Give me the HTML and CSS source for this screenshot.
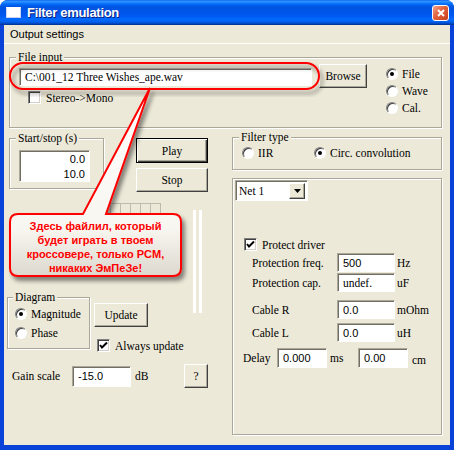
FILE: index.html
```html
<!DOCTYPE html>
<html lang="ru">
<head>
    <meta charset="UTF-8">
    <title>Filter emulation</title>
    <link rel="stylesheet" href="styles.css">
</head>
<body>
    <div class="window">
        <div class="titlebar">
            <span class="app-icon"></span>
            <span class="title">Filter emulation</span>
            <span class="close-btn">
                <svg width="8" height="8" viewBox="0 0 8 8"><path d="M1 1L7 7M7 1L1 7" stroke="#fff" stroke-width="2"/></svg>
            </span>
        </div>
        <div class="client">
            <div class="menubar"><span class="menu-item">Output settings</span></div>
            <div class="dialog">
                <div class="group file-group">
                    <span class="group-title">File input</span>
                    <div class="file-row">
                        <div class="file-col">
                            <div class="edit file-path">C:\001_12 Three Wishes_ape.wav</div>
                            <div class="check-row stereo"><span class="box"></span>Stereo-&gt;Mono</div>
                        </div>
                        <div class="btn browse">Browse</div>
                        <div class="radio-col">
                            <div class="radio-opt"><span class="radio on"></span>File</div>
                            <div class="radio-opt"><span class="radio"></span>Wave</div>
                            <div class="radio-opt"><span class="radio"></span>Cal.</div>
                        </div>
                    </div>
                </div>

                <div class="lower">
                    <div class="left-col">
                        <div class="play-row">
                            <div class="group startstop-group">
                                <span class="group-title">Start/stop (s)</span>
                                <div class="edit multi">
                                    <div>0.0</div>
                                    <div>10.0</div>
                                </div>
                            </div>
                            <div class="play-btns">
                                <div class="btn default play">Play</div>
                                <div class="btn stop">Stop</div>
                            </div>
                        </div>

                        <div class="mid-row">
                            <div class="mid-main">
                                <div class="meter"><span></span><span></span><span></span><span></span><span></span></div>
                                <div class="diagram-row">
                                    <div class="group diagram-group">
                                        <span class="group-title">Diagram</span>
                                        <div class="radio-opt"><span class="radio on"></span>Magnitude</div>
                                        <div class="radio-opt"><span class="radio"></span>Phase</div>
                                    </div>
                                    <div class="update-col">
                                        <div class="btn update">Update</div>
                                        <div class="check-row always">
                                            <span class="box"><svg width="9" height="9" viewBox="0 0 9 9"><path d="M1 4L3 6.5L8 1.5" stroke="#000" stroke-width="2" fill="none"/></svg></span>Always update
                                        </div>
                                    </div>
                                </div>
                            </div>
                            <div class="slider"></div>
                        </div>

                        <div class="gain-row">
                            <span class="gain-label">Gain scale</span>
                            <div class="edit num gain-input">-15.0</div>
                            <span class="unit db">dB</span>
                            <div class="btn help">?</div>
                        </div>
                    </div>

                    <div class="right-col">
                        <div class="group filter-group">
                            <span class="group-title">Filter type</span>
                            <div class="filter-opts">
                                <div class="radio-opt iir"><span class="radio"></span>IIR</div>
                                <div class="radio-opt"><span class="radio on"></span>Circ. convolution</div>
                            </div>
                        </div>

                        <div class="group net-panel">
                            <div class="combo">
                                <span class="combo-text">Net 1</span>
                                <span class="combo-btn"><svg width="7" height="4" viewBox="0 0 7 4"><path d="M0 0H7L3.5 4Z" fill="#000"/></svg></span>
                            </div>
                            <div class="check-row protect">
                                <span class="box"><svg width="9" height="9" viewBox="0 0 9 9"><path d="M1 4L3 6.5L8 1.5" stroke="#000" stroke-width="2" fill="none"/></svg></span>Protect driver
                            </div>
                            <div class="param-row freq">
                                <span class="param-label">Protection freq.</span>
                                <div class="edit num">500</div>
                                <span class="unit">Hz</span>
                            </div>
                            <div class="param-row cap">
                                <span class="param-label">Protection cap.</span>
                                <div class="edit serif">undef.</div>
                                <span class="unit">uF</span>
                            </div>
                            <div class="param-row cable-r">
                                <span class="param-label">Cable R</span>
                                <div class="edit num">0.0</div>
                                <span class="unit">mOhm</span>
                            </div>
                            <div class="param-row cable-l">
                                <span class="param-label">Cable L</span>
                                <div class="edit num">0.0</div>
                                <span class="unit">uH</span>
                            </div>
                            <div class="delay-row">
                                <span class="delay-label">Delay</span>
                                <div class="edit num">0.000</div>
                                <span class="unit ms">ms</span>
                                <div class="edit num">0.00</div>
                                <span class="unit cm">cm</span>
                            </div>
                        </div>
                    </div>
                </div>
            </div>
        </div>

        <!-- пометка поверх окна -->
        <svg class="annotation" width="454" height="450" viewBox="0 0 454 450">
            <defs>
                <filter id="shadow" x="-10%" y="-10%" width="130%" height="140%">
                    <feDropShadow dx="3" dy="4" stdDeviation="2" flood-color="#000" flood-opacity="0.45"/>
                </filter>
                <linearGradient id="calloutFill" x1="0" y1="0" x2="0" y2="1">
                    <stop offset="0" stop-color="#ffffff"/>
                    <stop offset="0.75" stop-color="#f8f6f0"/>
                    <stop offset="1" stop-color="#dcd8ce"/>
                </linearGradient>
            </defs>
            <rect x="10" y="63" width="309" height="26" rx="13" fill="none" stroke="#ff0000" stroke-width="2" filter="url(#shadow)"/>
            <path d="M18 214L83 214L150 88L106 214L173 214Q181 214 181 222L181 268Q181 276 173 276L18 276Q10 276 10 268L10 222Q10 214 18 214Z"
                  fill="url(#calloutFill)" stroke="#ff0000" stroke-width="2" filter="url(#shadow)"/>
        </svg>
        <div class="callout-text">Здесь файлил, который<br>будет играть в твоем<br>кроссовере, только PCM,<br>никаких ЭмПеЗе!</div>
    </div>
</body>
</html>
```

FILE: styles.css
```css
* {
    box-sizing: border-box;
}
body {
    margin: 0;
    background-color: #fff;
}
.window {
    position: relative;
    width: 454px;
    height: 450px;
    background-color: #0842d8;
    border-radius: 8px 8px 0 0;
    display: flex;
    flex-direction: column;
    overflow: hidden;
}
.titlebar {
    height: 25px;
    flex: none;
    display: flex;
    align-items: center;
    padding: 0 6px;
    background: linear-gradient(#0058ee 0%, #3593ff 4%, #288eff 8%, #127dff 12%, #036ffc 16%, #0262ee 20%, #0057e5 26%, #0054e3 30%, #0055eb 56%, #005bf5 66%, #026afe 76%, #0062ef 86%, #0052d6 92%, #0040ab 96%, #003092 100%);
}
.app-icon {
    width: 15px;
    height: 11px;
    background-color: #fff;
    border: 1px solid #c8d4f0;
    border-top: 2px solid #fff;
}
.title {
    margin-left: 6px;
    font-family: 'Liberation Sans', sans-serif;
    font-weight: bold;
    font-size: 13px;
    letter-spacing: -0.3px;
    color: #fff;
    text-shadow: 1px 1px 0 #0a1e80;
    flex: 1;
}
.close-btn {
    width: 17px;
    height: 16px;
    margin-right: -1px;
    border: 1px solid #fff;
    border-radius: 3px;
    background: linear-gradient(135deg, #f2a48c 0%, #e2613c 45%, #c6401c 100%);
    display: flex;
    align-items: center;
    justify-content: center;
}
.client {
    flex: 1;
    margin: 0 4px 5px 4px;
    background-color: #ece9d8;
    font-family: 'Liberation Serif', serif;
    font-size: 11.5px;
    color: #000;
}
.menubar {
    height: 19px;
    border-bottom: 1px solid #fff;
    line-height: 18px;
    padding-left: 6px;
    font-family: 'Liberation Sans', sans-serif;
    font-size: 11px;
}

/* рамки групп */
.group {
    border: 1px solid #aca899;
    box-shadow: 1px 1px 0 #fff, inset 1px 1px 0 #fff;
}
.group-title {
    display: table;
    margin: -8px 0 0 -3px;
    padding: 0 2px;
    line-height: 14px;
    background-color: #ece9d8;
}

/* контролы */
.btn {
    display: flex;
    align-items: center;
    justify-content: center;
    background-color: #ece9d8;
    border: 1px solid;
    border-color: #fff #404040 #404040 #fff;
    box-shadow: inset -1px -1px 0 #aca899;
}
.btn.default {
    border: 1px solid #000;
    box-shadow: inset 1px 1px 0 #fff, inset -1px -1px 0 #404040, inset -2px -2px 0 #aca899;
}
.edit {
    background-color: #fff;
    border: 1px solid;
    border-color: #aca899 #fff #fff #aca899;
    box-shadow: inset 1px 1px 0 #716f64;
    padding-left: 5px;
    display: flex;
    align-items: center;
    white-space: nowrap;
}
.edit.num {
    font-family: 'Liberation Sans', sans-serif;
    font-size: 11px;
}
.radio-opt {
    display: flex;
    align-items: center;
    white-space: nowrap;
}
.radio {
    position: relative;
    flex: none;
    width: 12px;
    height: 12px;
    margin-right: 4px;
    border-radius: 50%;
    background-color: #fff;
    border: 1px solid;
    border-color: #808080 #fff #fff #808080;
    box-shadow: inset 1px 1px 0 #404040;
}
.radio.on::after {
    content: '';
    position: absolute;
    left: 3px;
    top: 3px;
    width: 4px;
    height: 4px;
    border-radius: 50%;
    background-color: #000;
}
.check-row {
    display: flex;
    align-items: center;
    height: 13px;
    white-space: nowrap;
}
.box {
    flex: none;
    width: 13px;
    height: 13px;
    margin-right: 5px;
    background-color: #fff;
    border: 1px solid;
    border-color: #808080 #fff #fff #808080;
    box-shadow: inset 1px 1px 0 #404040, inset -1px -1px 0 #d4d0c8;
    display: flex;
    align-items: center;
    justify-content: center;
}
.unit {
    margin-left: 2px;
}

/* File input */
.file-group {
    margin: 13px 0 0 5px;
    width: 433px;
    height: 71px;
    padding-left: 9px;
}
.file-row {
    display: flex;
    align-items: flex-start;
}
.file-col {
    margin-top: 4px;
}
.file-path {
    width: 293px;
    height: 18px;
}
.stereo {
    margin: 5px 0 0 9px;
}
.browse {
    margin-left: 7px;
    width: 48px;
    height: 24px;
}
.radio-col {
    margin: 1px 0 0 19px;
}
.radio-col .radio-opt {
    height: 17px;
}

/* нижняя часть */
.lower {
    display: flex;
}
.left-col {
    width: 228px;
}
.play-row {
    display: flex;
    align-items: flex-start;
}
.startstop-group {
    margin: 10px 0 0 5px;
    width: 95px;
    height: 51px;
    padding-left: 9px;
}
.multi {
    margin-top: 5px;
    width: 71px;
    height: 32px;
    flex-direction: column;
    align-items: flex-end;
    padding: 1px 4px 0 0;
    font-family: 'Liberation Sans', sans-serif;
    font-size: 11px;
    line-height: 15px;
}
.play-btns {
    margin: 10px 0 0 32px;
}
.play {
    width: 72px;
    height: 25px;
}
.stop {
    width: 72px;
    height: 24px;
    margin-top: 5px;
}
.mid-row {
    display: flex;
    align-items: flex-start;
}
.mid-main {
    width: 189px;
}
.meter {
    display: flex;
    margin: 11px 0 0 106px;
}
.meter span {
    width: 11px;
    height: 11px;
    border: 1px solid #bdbab0;
    margin-right: -1px;
}
.diagram-row {
    display: flex;
    align-items: flex-start;
    margin-top: 83px;
}
.diagram-group {
    margin-left: 3px;
    width: 83px;
    height: 52px;
    padding-left: 7px;
}
.diagram-group .group-title {
    margin-left: -2px;
}
.diagram-group .radio-opt {
    height: 19px;
}
.update-col {
    margin: 6px 0 0 4px;
}
.update {
    width: 54px;
    height: 24px;
}
.always {
    margin: 12px 0 0 3px;
}
.slider {
    margin-top: 18px;
    width: 9px;
    height: 103px;
    border-left: 3px solid #fff;
    border-right: 3px solid #fff;
}
.gain-row {
    display: flex;
    align-items: center;
    height: 24px;
    margin-top: 12px;
}
.gain-label {
    margin-left: 8px;
    width: 60px;
}
.gain-input {
    width: 59px;
    height: 21px;
}
.db {
    margin-left: 4px;
    width: 49px;
}
.help {
    width: 24px;
    height: 24px;
}

/* правая колонка */
.right-col {
    width: 210px;
}
.filter-group {
    margin-top: 9px;
    height: 33px;
    padding-left: 9px;
}
.filter-opts {
    display: flex;
    margin-top: 3px;
}
.iir {
    width: 72px;
}
.net-panel {
    margin-top: 8px;
    height: 257px;
    padding: 1px 0 0 2px;
}
.combo {
    width: 73px;
    height: 21px;
    display: flex;
    align-items: center;
    background-color: #fff;
    border: 1px solid;
    border-color: #aca899 #fff #fff #aca899;
    box-shadow: inset 1px 1px 0 #716f64;
    padding: 2px 2px 2px 3px;
}
.combo-text {
    flex: 1;
}
.combo-btn {
    width: 16px;
    height: 16px;
    display: flex;
    align-items: center;
    justify-content: center;
    background-color: #ece9d8;
    border: 1px solid;
    border-color: #fff #404040 #404040 #fff;
    box-shadow: inset -1px -1px 0 #aca899;
}
.protect {
    margin: 37px 0 0 9px;
}
.param-row {
    display: flex;
    align-items: center;
    margin-left: 17px;
}
.param-row .edit {
    width: 58px;
    height: 19px;
}
.param-label {
    width: 85px;
}
.freq {
    margin-top: 2px;
}
.cap {
    margin-top: 1px;
}
.cable-r {
    margin-top: 8px;
}
.cable-l {
    margin-top: 4px;
}
.delay-row {
    display: flex;
    align-items: center;
    margin: 6px 0 0 8px;
}
.delay-label {
    width: 34px;
}
.delay-row .edit {
    width: 50px;
    height: 20px;
}
.ms {
    margin-left: 3px;
    width: 28px;
}
.cm {
    margin-left: 4px;
    padding-top: 4px;
}

/* выноска */
.annotation {
    position: absolute;
    left: 0;
    top: 0;
    pointer-events: none;
}
.callout-text {
    position: absolute;
    left: 10px;
    top: 214px;
    width: 171px;
    padding-top: 5px;
    text-align: center;
    font-family: 'Liberation Sans', sans-serif;
    font-weight: bold;
    font-size: 11px;
    line-height: 14px;
    color: #ff0000;
}
```
